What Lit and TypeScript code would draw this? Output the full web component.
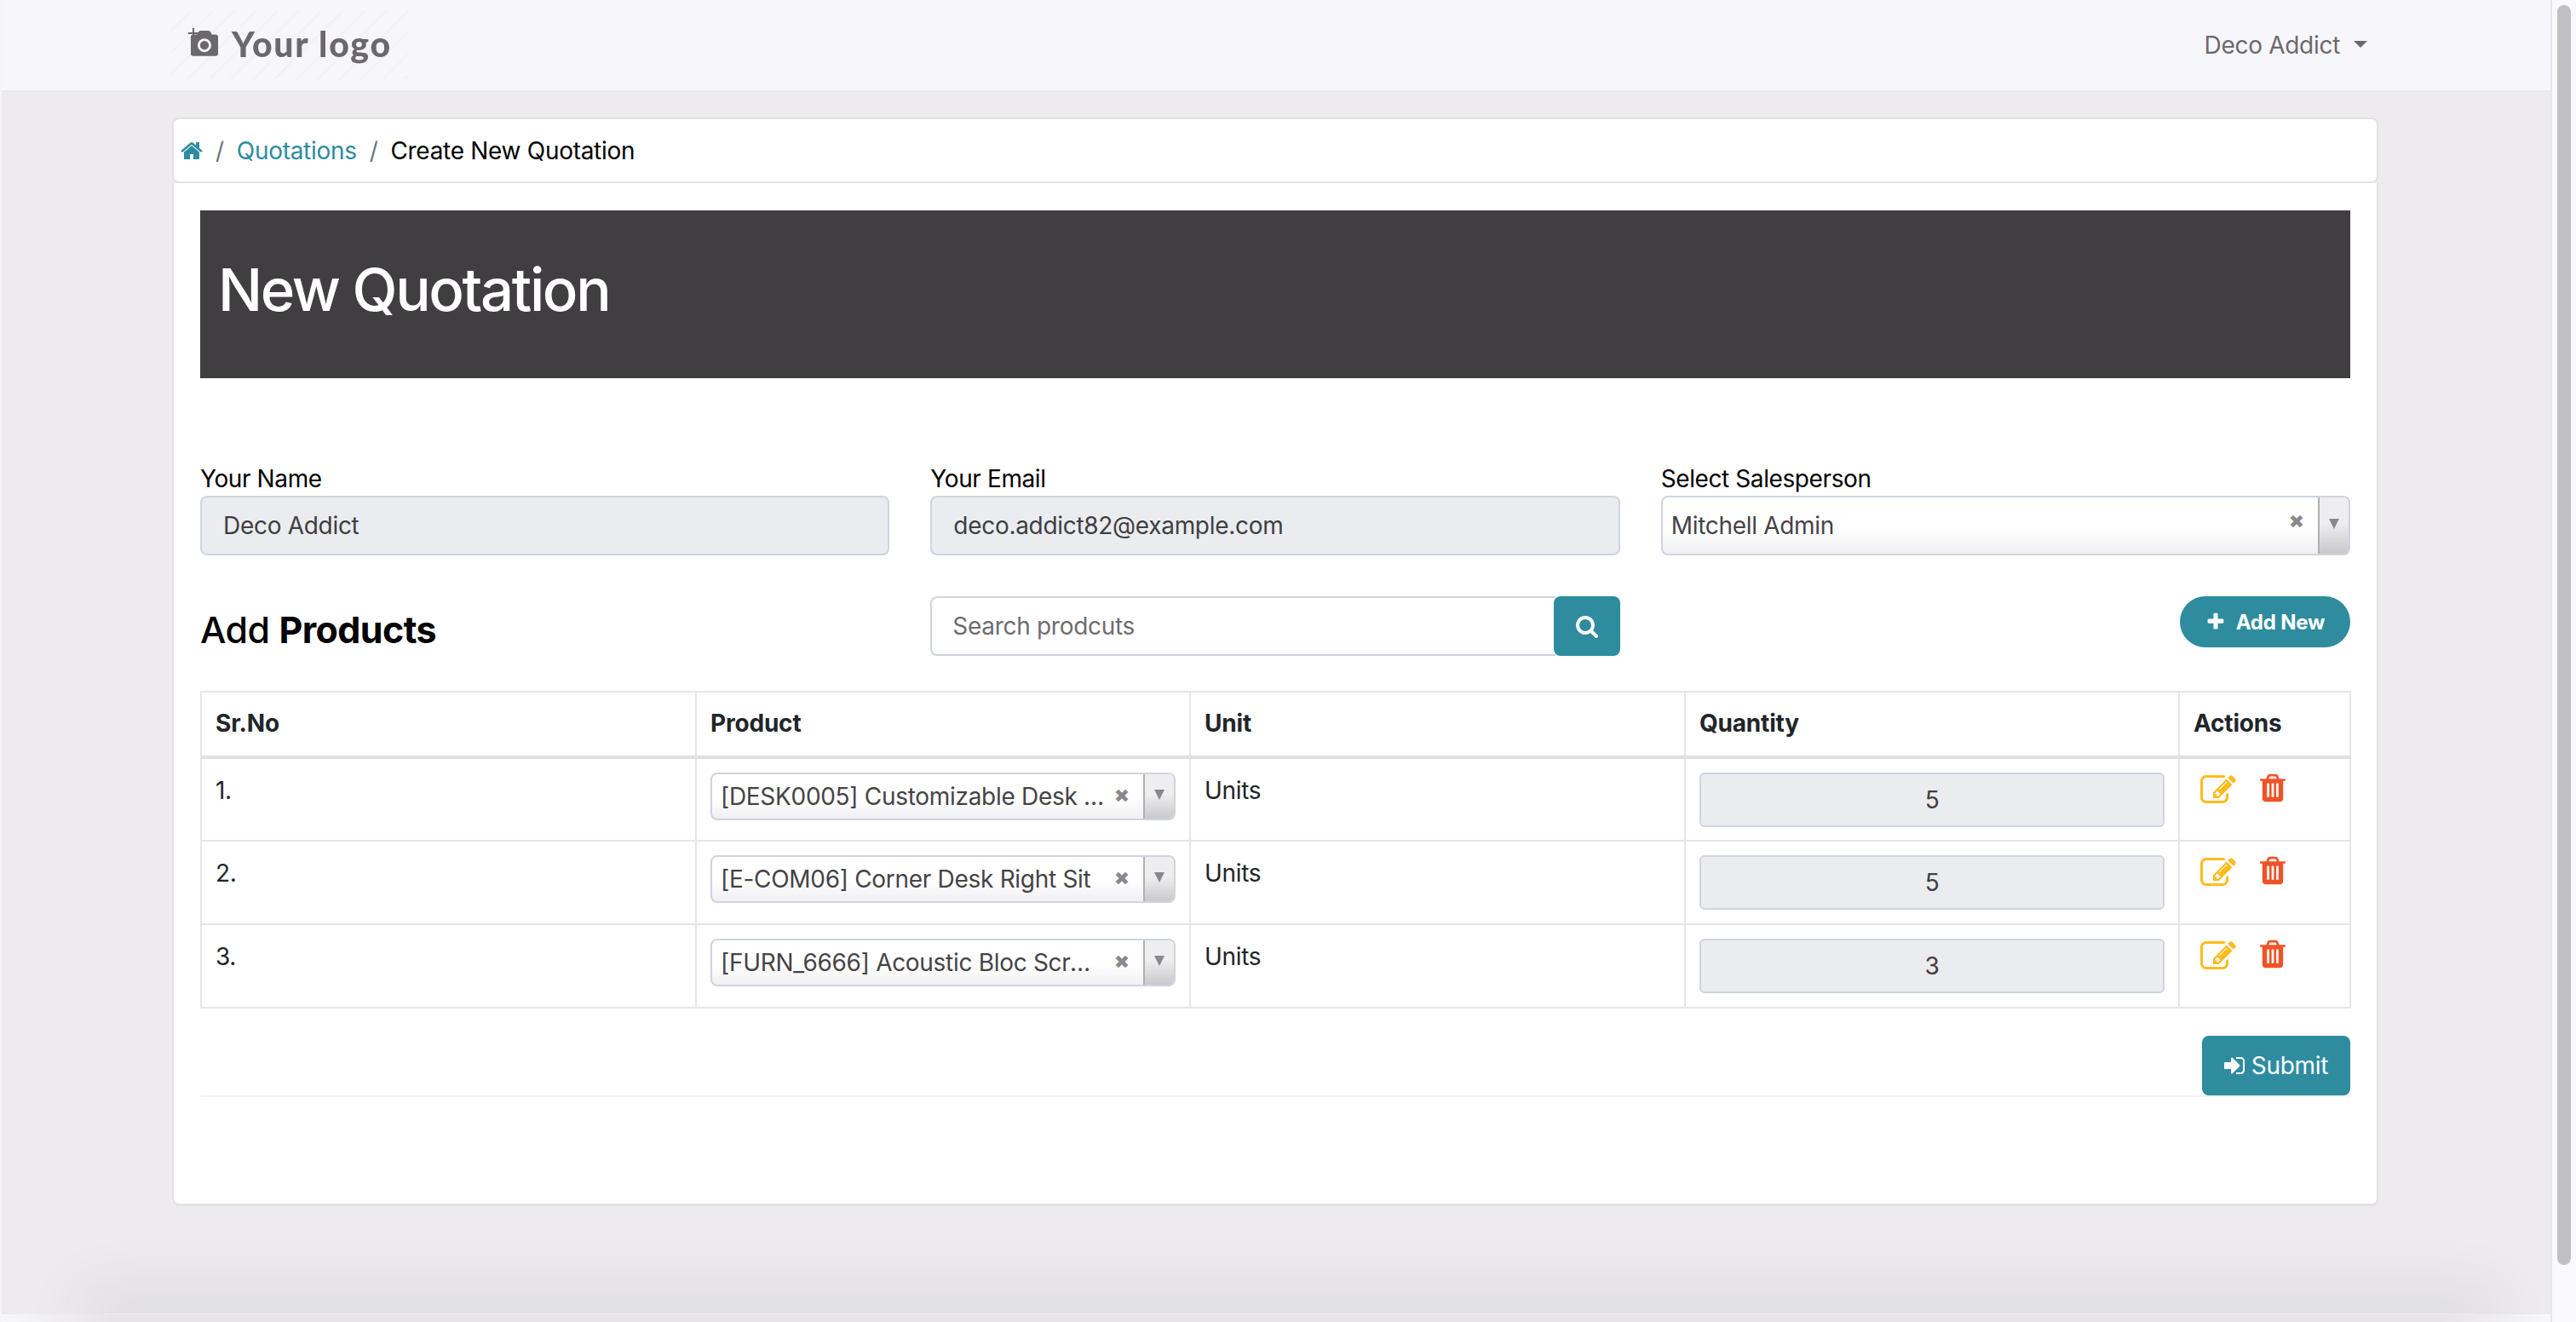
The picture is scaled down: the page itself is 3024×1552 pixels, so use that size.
import { LitElement, html, css, svg } from "lit";
import { customElement } from "lit/decorators.js";

const P = {
  home: "M1472 992v480q0 26-19 45t-45 19h-384v-384h-256v384h-384q-26 0-45-19t-19-45v-480q0-1 .5-3t.5-3l575-474 575 474q1 2 1 6zm223-69l-62 74q-8 9-21 11h-3q-13 0-21-7l-692-577-692 577q-12 8-24 7-13-2-21-11l-62-74q-8-10-7-23.500t11-21.500l719-599q32-26 76-26t76 26l244 204v-195q0-14 9-23t23-9h192q14 0 23 9t9 23v408l219 182q10 8 11 21.500t-7 23.500z",
  search: "M1216 832q0-185-131.500-316.500t-316.500-131.500-316.500 131.500-131.500 316.500 131.500 316.500 316.500 131.500 316.500-131.500 131.500-316.500zm512 832q0 52-38 90t-90 38q-54 0-90-38l-343-342q-179 124-399 124-143 0-273.500-55.500t-225-150-150-225-55.500-273.500 55.500-273.500 150-225 225-150 273.500-55.500 273.500 55.500 225 150 150 225 55.500 273.500q0 220-124 399l343 343q37 37 37 90z",
  edit: "M888 1184l116-116-152-152-116 116v56h96v96h56zm440-720q-16-16-33 1l-350 350q-17 17-1 33t33-1l350-350q17-17 1-33zm80 594v190q0 119-84.500 203.500t-203.500 84.500h-832q-119 0-203.500-84.500t-84.500-203.500v-832q0-119 84.500-203.500t203.500-84.500h832q63 0 117 25 15 7 18 23 3 17-9 29l-49 49q-14 14-32 8-23-6-45-6h-832q-66 0-113 47t-47 113v832q0 66 47 113t113 47h832q66 0 113-47t47-113v-126q0-13 9-22l64-64q15-15 35-7t20 29zm-96-738l288 288-672 672h-288v-288zm444 132l-92 92-288-288 92-92q28-28 68-28t68 28l152 152q28 28 28 68t-28 68z",
  trash: "M704 1376v-704q0-14-9-23t-23-9h-64q-14 0-23 9t-9 23v704q0 14 9 23t23 9h64q14 0 23-9t9-23zm256 0v-704q0-14-9-23t-23-9h-64q-14 0-23 9t-9 23v704q0 14 9 23t23 9h64q14 0 23-9t9-23zm256 0v-704q0-14-9-23t-23-9h-64q-14 0-23 9t-9 23v704q0 14 9 23t23 9h64q14 0 23-9t9-23zm-544-992h448l-48-117q-7-9-17-11h-317q-10 2-17 11zm928 32v64q0 14-9 23t-23 9h-96v948q0 83-47 143.500t-113 60.500h-832q-66 0-113-58.500t-47-141.500v-952h-96q-14 0-23-9t-9-23v-64q0-14 9-23t23-9h309l70-167q15-37 54-63t79-26h320q40 0 79 26t54 63l70 167h309q14 0 23 9t9 23z",
  signin: "M1312 896q0 26-19 45l-544 544q-19 19-45 19t-45-19-19-45v-288h-448q-26 0-45-19t-19-45v-384q0-26 19-45t45-19h448v-288q0-26 19-45t45-19 45 19l544 544q19 19 19 45zm352-352v704q0 119-84.500 203.500t-203.500 84.500h-320q-13 0-22.500-9.500t-9.500-22.500q0-4-1-20t-.5-26.500 3-23.500 10-19.500 20.500-6.500h320q66 0 113-47t47-113v-704q0-66-47-113t-113-47h-312l-11.500-1-11.500-3-8-5.500-7-9-2-13.500q0-4-1-20t-.5-26.500 3-23.500 10-19.500 20.500-6.500h320q119 0 203.500 84.500t84.500 203.500z",
  plus: "M1600 736v192q0 40-28 68t-68 28h-416v416q0 40-28 68t-68 28h-192q-40 0-68-28t-28-68v-416h-416q-40 0-68-28t-28-68v-192q0-40 28-68t68-28h416v-416q0-40 28-68t68-28h192q40 0 68 28t28 68v416h416q40 0 68 28t28 68z",
  camera: "M896 672q119 0 203.500 84.500t84.500 203.500-84.500 203.500-203.500 84.500-203.500-84.500-84.500-203.500 84.500-203.500 203.500-84.500zm704-416q106 0 181 75t75 181v896q0 106-75 181t-181 75h-1408q-106 0-181-75t-75-181v-896q0-106 75-181t181-75h224l51-136q19-49 69.500-84.500t103.500-35.500h512q53 0 103.500 35.500t69.500 84.500l51 136h224zm-704 1152q185 0 316.500-131.500t131.500-316.500-131.500-316.500-316.500-131.500-316.500 131.500-131.500 316.500 131.500 316.500 316.500 131.500z",
};
const icon = (p: string, cls: string) =>
  html`<svg class=${cls} viewBox="0 0 1792 1792" fill="currentColor">${svg`<path d=${p}></path>`}</svg>`;

const ROWS = [
  { n: "1.", p: "[DESK0005] Customizable Desk (Steel, Black)", q: "5", pad: 0 },
  { n: "2.", p: "[E-COM06] Corner Desk Right Sit", q: "5", pad: 0 },
  { n: "3.", p: "[FURN_6666] Acoustic Bloc Screens", q: "3", pad: 14 },
];

@customElement("app-root")
export class AppRoot extends LitElement {
  static styles = css`
    :host { display: flex; width: 3024px; height: 1552px; overflow: hidden; font-family: Inter, "Liberation Sans", sans-serif; font-size: 28px; letter-spacing: -0.3px; color: #000; background: #edebee; }
    * { box-sizing: border-box; }
    .main { width: 2994px; display: flex; flex-direction: column; height: 100%; border-left: 2px solid #f6f5f8; position: relative; }
    .gutter { width: 30px; background: #f9f8fb; border-left: 2px solid #e7e6e9; padding: 6px 6px 0 6px; }
    .thumb { height: 1479px; background: #c0bfc2; border-radius: 8px; }
    .nav { height: 106px; background: #f7f6fa; display: flex; align-items: center; justify-content: space-between; padding: 0 215px 0 198px; flex: none; }
    .logo { width: 279px; height: 80px; display: flex; align-items: center; padding-left: 24px; color: #6c696c; font-family: Lato, sans-serif; font-weight: 900; font-size: 41px; letter-spacing: 1.7px; background: repeating-linear-gradient(135deg, transparent 0 16px, #f2f1f5 16px 18px); }
    .logo-inner { display: flex; align-items: center; gap: 16px; filter: blur(0.6px); margin-top: -4px; }
    .cam-wrap { position: relative; display: flex; width: 32px; height: 32px; margin-top: 2px; }
    .cam { width: 32px; height: 32px; }
    .cam-plus { position: absolute; left: -3px; top: -3px; width: 12px; height: 12px; stroke: #6c696c; stroke-width: 2; fill: none; }
    .user { display: flex; align-items: center; gap: 16px; color: #6c696c; }
    .caret { width: 0; height: 0; border-left: 8px solid transparent; border-right: 8px solid transparent; border-top: 8px solid #6c696c; margin-top: -3px; }
    .content { flex: 1; padding: 32px 202px 0 200px; min-height: 0; }
    .crumb { height: 77px; background: #fff; border: 2px solid #e2e2e5; border-radius: 8px; display: flex; align-items: center; padding-left: 7px; }
    .crumb svg { width: 28px; height: 28px; color: #2e8c9e; }
    .sep { color: #6c757d; margin: 0 15px; }
    .crumb svg + .sep { margin-left: 14px; }
    .crumb a { color: #2e8c9e; }
    .card { height: 1201px; background: #fff; border: 2px solid #e2e2e5; border-top: 0; border-bottom-width: 3px; border-radius: 0 0 8px 8px; padding: 32px 31px 0; }
    .banner { height: 197px; background: #403e41; color: #fff; display: flex; padding: 51px 21px 0; }
    h1 { margin: 0; font-size: 69px; font-weight: 500; line-height: 84px; letter-spacing: -2.4px; }
    .fields { display: grid; grid-template-columns: repeat(3, 1fr); gap: 48px; margin-top: 96px; }
    label { display: block; line-height: 44px; height: 42px; letter-spacing: -0.4px; }
    .ro { height: 70px; background: #eaecf0; border: 2px solid #cfd4df; border-radius: 8px; display: flex; align-items: center; padding: 0 25px; color: #403e41; }
    .sel { display: flex; align-items: stretch; border: 2px solid #cfd4df; border-radius: 8px; background: linear-gradient(#fff 0 55%, #f0eff2 100%); color: #454346; overflow: hidden; }
    .sel.big { height: 70px; }
    .sel.small { height: 56px; }
    .sel-text { flex: 1; min-width: 0; white-space: nowrap; overflow: hidden; text-overflow: ellipsis; padding-left: 10px; align-self: center; }
    .sel .x { color: #8a888b; font-size: 22px; width: 50px; margin-left: -6px; flex: none; text-align: center; font-family: "DejaVu Sans", sans-serif; align-self: center; line-height: 1; letter-spacing: 0; }
    .sel.big .x { margin-top: -8px; }
    .arrow { width: 36px; flex: none; border-left: 2px solid #b0afb2; background: linear-gradient(#eeedf0 0 45%, #c9c8cb 100%); display: flex; align-items: center; justify-content: center; }
    .tri { width: 0; height: 0; border-left: 6px solid transparent; border-right: 6px solid transparent; border-top: 12px solid #8a888b; margin-top: -4px; }
    .tools { display: grid; grid-template-columns: repeat(3, 1fr); gap: 48px; margin-top: 48px; align-items: start; }
    h2 { margin: 9px 0 0; font-size: 43px; font-weight: 500; line-height: 60px; letter-spacing: -0.6px; }
    h2 b { font-weight: 700; }
    .search { display: flex; height: 70px; }
    .search-in { flex: 1; border: 2px solid #cfd4df; border-right: 0; border-radius: 8px 0 0 8px; display: flex; align-items: center; padding: 0 24px; color: #6e6c70; }
    .search-btn { width: 78px; background: #2e8c9e; color: #fff; border-radius: 8px; display: flex; align-items: center; justify-content: center; margin-left: -2px; }
    .search-btn svg { width: 28px; height: 28px; }
    .add-wrap { display: flex; justify-content: flex-end; }
    .add { width: 200px; height: 60px; background: #2e8c9e; color: #fff; border-radius: 30px; display: flex; align-items: center; justify-content: center; gap: 12px; font-size: 24px; font-weight: 700; letter-spacing: -0.2px; }
    .add svg { width: 24px; height: 24px; }
    table { border-collapse: collapse; table-layout: fixed; width: 2523px; margin-top: 41px; }
    th, td { border: 2px solid #e4e6ea; padding: 0 16px; text-align: left; vertical-align: top; color: #212529; }
    th { height: 77px; vertical-align: middle; font-weight: 700; border-bottom: 4px solid #e0e0e2; letter-spacing: -0.2px; padding-bottom: 2px; }
    td { height: 98px; padding-top: 18px; line-height: 38px; }
    td.pc, td.ac { padding-top: 16px; }
    .qty { height: 64px; background: #eaecf0; border: 2px solid #cfd4df; border-radius: 6px; text-align: center; line-height: 61px; color: #403e41; }
    .acts { display: flex; align-items: flex-start; gap: 24px; margin-left: 8px; }
    .e { width: 42px; height: 42px; color: #ffbb1c; }
    .t { width: 38px; height: 38px; color: #f05327; margin-top: -1px; }
    .submit-row { display: flex; justify-content: flex-end; margin-top: 32px; border-bottom: 2px solid #f3f3f5; }
    .submit { width: 174px; height: 70px; background: #2e8c9e; color: #fff; border-radius: 8px; display: flex; align-items: center; justify-content: center; gap: 6px; padding-right: 2px; }
    .submit svg { width: 28px; height: 28px; }
    .foot { height: 9px; flex: none; background: linear-gradient(90deg, #f8f7fa 0, #e6e4e7 130px, #e6e4e7 calc(100% - 130px), #f8f7fa 100%); position: relative; }
    .foot::before { content: ""; position: absolute; left: 120px; right: 90px; bottom: 9px; height: 1px; box-shadow: 0 0 70px 28px rgba(60,55,65,.09); clip-path: inset(-200px -200px 0 -200px); }
  `;

  private select(text: string, size: string, pad = 0) {
    return html`<div class="sel ${size}">
      <span class="sel-text" style="padding-right:${pad}px">${text}</span><span class="x">✖</span>
      <span class="arrow"><span class="tri"></span></span>
    </div>`;
  }

  render() {
    return html`
      <div class="main">
        <header class="nav">
          <div class="logo">
            <div class="logo-inner">
              <span class="cam-wrap">
                ${icon(P.camera, "cam")}
                <svg class="cam-plus" viewBox="0 0 12 12">${svg`<path d="M6 0v12M0 6h12"></path>`}</svg>
              </span>
              <span>Your logo</span>
            </div>
          </div>
          <div class="user"><span>Deco Addict</span><span class="caret"></span></div>
        </header>
        <div class="content">
          <nav class="crumb">
            ${icon(P.home, "")}<span class="sep">/</span><a>Quotations</a><span class="sep">/</span><span>Create New Quotation</span>
          </nav>
          <section class="card">
            <div class="banner"><h1>New Quotation</h1></div>
            <div class="fields">
              <div><label>Your Name</label><div class="ro">Deco Addict</div></div>
              <div><label>Your Email</label><div class="ro">deco.addict82@example.com</div></div>
              <div><label>Select Salesperson</label>${this.select("Mitchell Admin", "big")}</div>
            </div>
            <div class="tools">
              <h2>Add <b>Products</b></h2>
              <div class="search">
                <div class="search-in">Search prodcuts</div>
                <div class="search-btn">${icon(P.search, "")}</div>
              </div>
              <div class="add-wrap"><div class="add">${icon(P.plus, "")}<span>Add New</span></div></div>
            </div>
            <table>
              <colgroup><col style="width:581px" /><col style="width:580px" /><col style="width:581px" /><col style="width:580px" /><col style="width:201px" /></colgroup>
              <thead><tr><th>Sr.No</th><th>Product</th><th>Unit</th><th>Quantity</th><th>Actions</th></tr></thead>
              <tbody>
                ${ROWS.map((r) => html`<tr>
                  <td>${r.n}</td>
                  <td class="pc">${this.select(r.p, "small", r.pad)}</td>
                  <td>Units</td>
                  <td class="pc"><div class="qty">${r.q}</div></td>
                  <td class="ac"><div class="acts">${icon(P.edit, "e")}${icon(P.trash, "t")}</div></td>
                </tr>`)}
              </tbody>
            </table>
            <div class="submit-row"><div class="submit">${icon(P.signin, "")}<span>Submit</span></div></div>
          </section>
        </div>
        <div class="foot"></div>
      </div>
      <div class="gutter"><div class="thumb"></div></div>
    `;
  }
}
